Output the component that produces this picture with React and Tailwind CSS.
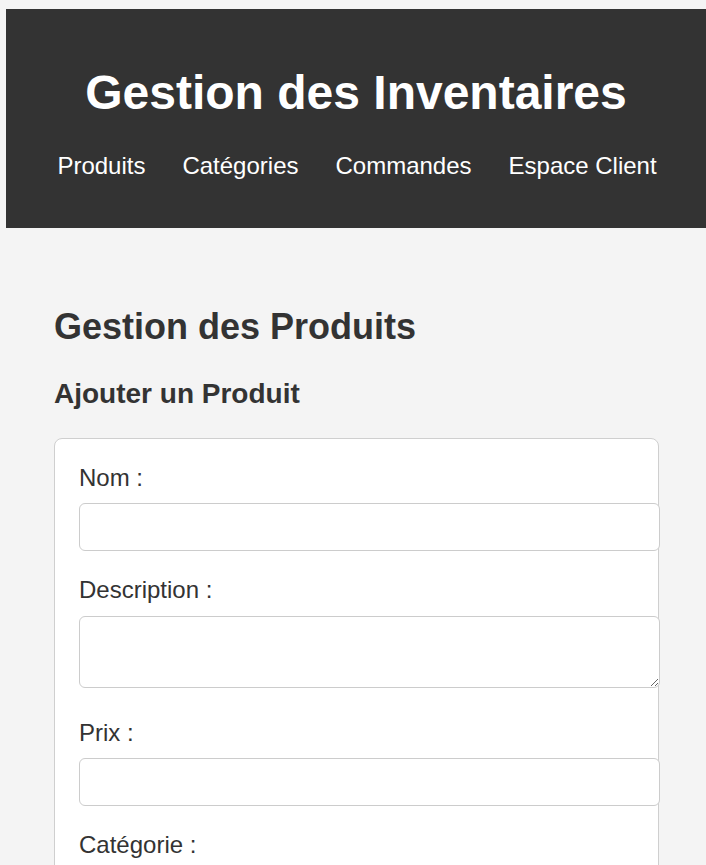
import React, { useState } from "react";

const links = ["Produits", "Catégories", "Commandes", "Espace Client"];

function App() {
  const [form, setForm] = useState({ nom: "", description: "", prix: "", categorie: "" });

  const handleChange = (e) => {
    setForm({ ...form, [e.target.name]: e.target.value });
  };

  return (
    <div className="min-h-screen bg-[#f4f4f4] pl-[6px] pt-[9px] font-['Liberation_Sans',Arial,sans-serif] text-[#333]">
      <header className="bg-[#333] pt-[56px] pb-[48px] text-center text-white">
        <h1 className="text-[48px] font-bold leading-[55px]">Gestion des Inventaires</h1>
        <nav className="mt-[32px] flex justify-center gap-[37px] pl-[2px] text-[24px] leading-[28px]">
          {links.map((l) => (
            <a key={l} href="#" className="text-white">
              {l}
            </a>
          ))}
        </nav>
      </header>

      <main className="pl-[48px] pr-[47px] pt-[78px] pb-[48px]">
        <h2 className="text-[36px] font-bold leading-[41px]">Gestion des Produits</h2>
        <h3 className="mt-[31px] text-[28px] font-bold leading-[32px]">Ajouter un Produit</h3>

        <form className="mt-[28px] rounded-[8px] border border-[#cfcfcf] bg-white px-[24px] pt-[25px] pb-[23px]">
          <label className="mb-[11px] block text-[24px] leading-[28px]">Nom :</label>
          <input
            name="nom"
            value={form.nom}
            onChange={handleChange}
            className="mb-[25px] box-content block h-[22px] w-full rounded-[6px] border border-[#ccc] bg-white px-[12px] py-[12px] text-[24px]"
          />

          <label className="mb-[12px] block text-[24px] leading-[28px]">Description :</label>
          <textarea
            name="description"
            value={form.description}
            onChange={handleChange}
            className="mb-[31px] box-content block h-[46px] w-full rounded-[6px] border border-[#ccc] bg-white px-[12px] py-[12px] text-[24px]"
          />

          <label className="mb-[11px] block text-[24px] leading-[28px]">Prix :</label>
          <input
            name="prix"
            type="number"
            value={form.prix}
            onChange={handleChange}
            className="mb-[25px] box-content block h-[22px] w-full rounded-[6px] border border-[#ccc] bg-white px-[12px] py-[12px] text-[24px]"
          />

          <label className="mb-[12px] block text-[24px] leading-[28px]">Catégorie :</label>
          <select
            name="categorie"
            value={form.categorie}
            onChange={handleChange}
            className="mb-[26px] box-content block h-[22px] w-full rounded-[6px] border border-[#ccc] bg-white px-[12px] py-[12px] text-[24px]"
          >
            <option value="">-- Choisir --</option>
          </select>

          <button type="button" className="rounded-[6px] bg-[#333] px-[24px] py-[12px] text-[24px] text-white">
            Ajouter
          </button>
        </form>
      </main>
    </div>
  );
}

export default App;
